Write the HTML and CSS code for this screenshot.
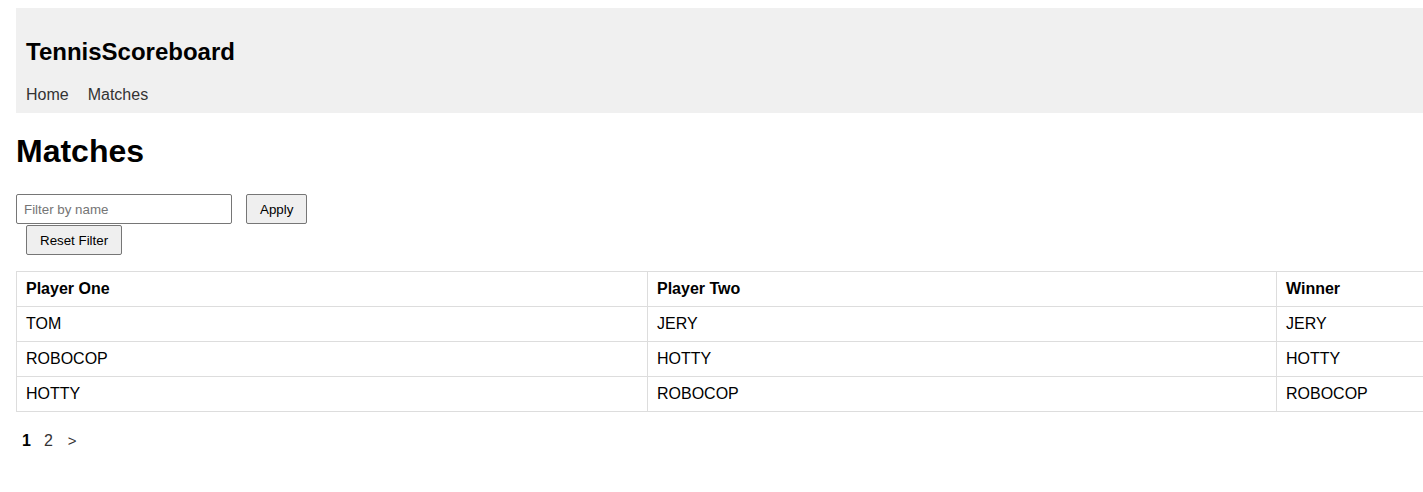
FILE: index.html
```html
<!DOCTYPE html>
<html>
<head>
<meta charset="utf-8">
<title>Matches</title>
<link rel="stylesheet" href="styles.css">
</head>
<body>
<div class="page">
  <header class="header">
    <div class="brand">TennisScoreboard</div>
    <nav class="nav">
      <a class="nav-link" href="#">Home</a>
      <a class="nav-link" href="#">Matches</a>
    </nav>
  </header>
  <h1 class="title">Matches</h1>
  <form class="filter">
    <div class="filter-row">
      <input class="filter-input" type="text" placeholder="Filter by name">
      <button class="btn" type="button">Apply</button>
    </div>
    <div class="reset-row">
      <button class="btn" type="button">Reset Filter</button>
    </div>
  </form>
  <table class="matches">
    <colgroup>
      <col class="c1"><col class="c2"><col class="c3">
    </colgroup>
    <thead>
      <tr><th>Player One</th><th>Player Two</th><th>Winner</th></tr>
    </thead>
    <tbody>
      <tr><td>TOM</td><td>JERY</td><td>JERY</td></tr>
      <tr><td>ROBOCOP</td><td>HOTTY</td><td>HOTTY</td></tr>
      <tr><td>HOTTY</td><td>ROBOCOP</td><td>ROBOCOP</td></tr>
    </tbody>
  </table>
  <div class="pager">
    <span class="page-link current">1</span>
    <a class="page-link" href="#">2</a>
    <a class="page-link next" href="#">&gt;</a>
  </div>
</div>
</body>
</html>
```
FILE: styles.css
```css
html {
  margin: 0;
  padding: 0;
  background: #fff;
}
body {
  margin: 8px 0 8px 8px;
  padding: 0;
  font-family: "Liberation Sans", Arial, sans-serif;
  color: #000;
  background: #fff;
}
.page {
  margin-left: 8px;
  width: calc(100% - 8px);
  overflow: hidden;
}
.header {
  background: #f0f0f0;
  padding: 30px 10px 9px;
}
.brand {
  font-size: 24px;
  font-weight: bold;
  line-height: 28px;
  margin-bottom: 20px;
}
.nav {
  display: flex;
  gap: 19px;
  font-size: 16px;
  line-height: 18px;
}
.nav-link {
  color: #333;
  text-decoration: none;
}
.title {
  font-size: 32px;
  font-weight: bold;
  line-height: 37px;
  margin: 20px 0 24px;
}
.filter {
  margin: 0 0 16px;
}
.filter-row {
  display: flex;
  gap: 14px;
}
.filter-input {
  box-sizing: border-box;
  width: 216px;
  height: 30px;
  margin: 0;
  padding: 1px 7px;
  border: 1px solid #767676;
  border-radius: 2px;
  font-family: "Liberation Sans", Arial, sans-serif;
  font-size: 13.333px;
}
.filter-input::placeholder {
  color: #757575;
}
.reset-row {
  padding-left: 10px;
  margin-top: 1px;
}
.btn {
  box-sizing: border-box;
  height: 30px;
  margin: 0;
  padding: 1px 13px;
  background: #efefef;
  border: 1px solid #767676;
  border-radius: 2px;
  font-family: "Liberation Sans", Arial, sans-serif;
  font-size: 13.333px;
  color: #000;
}
.matches {
  width: calc(100% + 4px);
  border-collapse: collapse;
  border: 1px solid #ddd;
  font-size: 16px;
}
.c1 { width: 631px; }
.c2 { width: 629px; }
.matches th,
.matches td {
  border: 1px solid #ddd;
  padding: 8px 9px;
  line-height: 18px;
  text-align: left;
}
.matches th {
  font-weight: bold;
}
.pager {
  display: flex;
  gap: 1px;
  margin-top: 20px;
  padding-bottom: 8px;
  font-size: 16px;
  line-height: 18px;
}
.page-link {
  padding: 0 6px;
  color: #333;
  text-decoration: none;
}
.page-link.current {
  font-weight: bold;
  color: #000;
}
.page-link.next {
  margin-left: 2px;
  font-size: 15px;
}
```
